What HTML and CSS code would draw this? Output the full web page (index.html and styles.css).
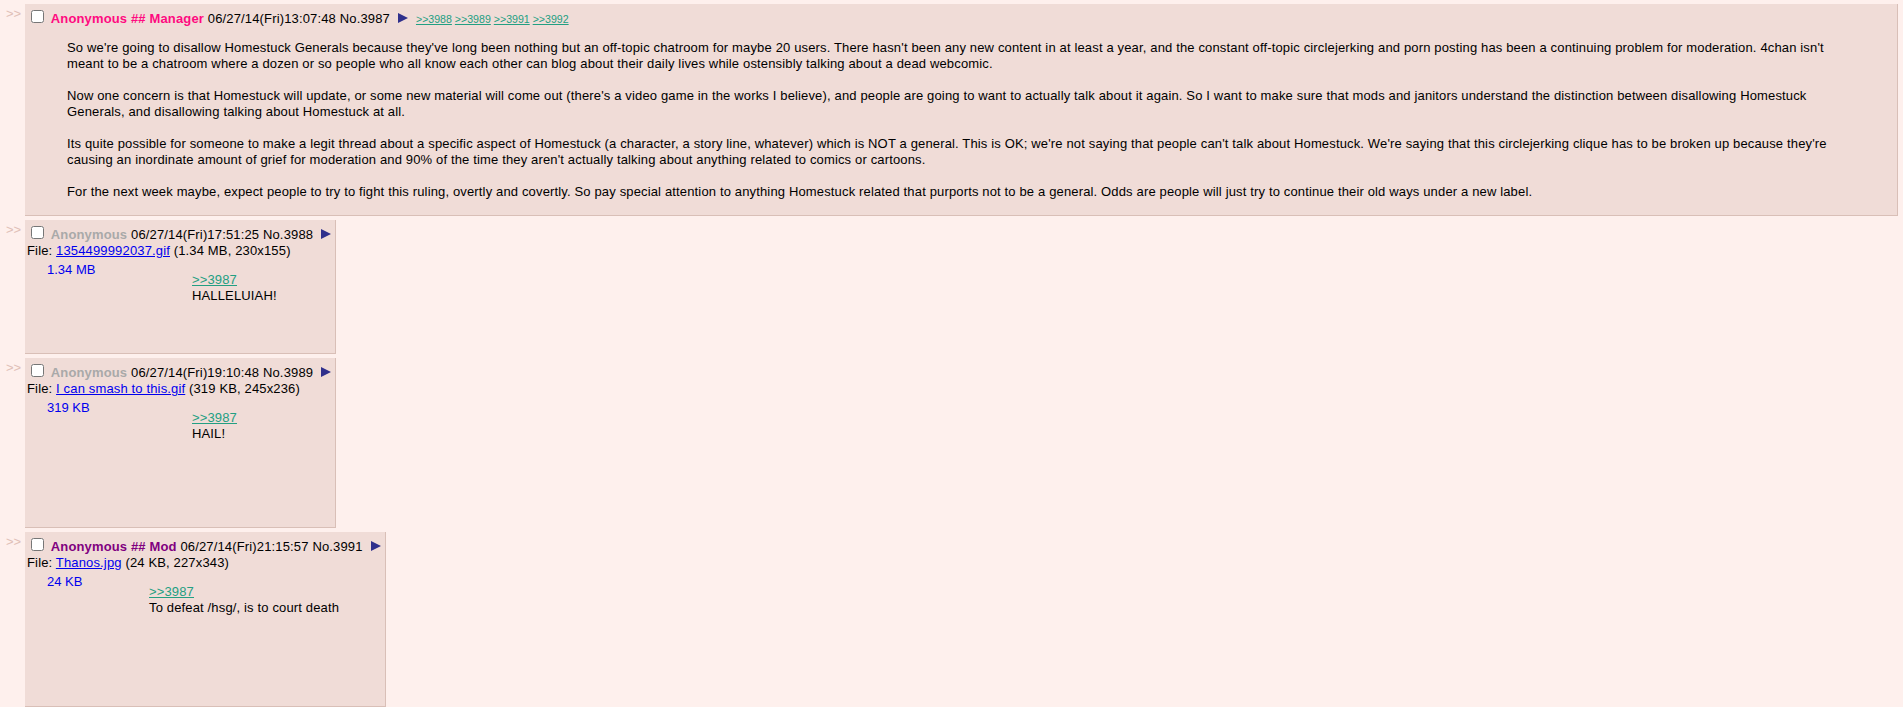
FILE: index.html
```html
<!DOCTYPE html>
<html lang="en">
<head>
  <meta charset="UTF-8">
  <meta name="viewport" content="width=device-width, initial-scale=1.0">
  <title>/co/ - Thread No.3987</title>
  <link rel="stylesheet" href="styles.css">
</head>
<body>

  <div class="thread">

    <!-- Opening post -->
    <div class="post-container">
      <div class="side-arrows">&gt;&gt;</div>
      <div class="post">
        <div class="post-info">
          <input type="checkbox">
          <span class="name manager">Anonymous ## Manager</span>
          <span class="date">06/27/14(Fri)13:07:48</span>
          <span class="post-num">No.3987</span><a class="menu-btn"></a><span class="backlinks"><a href="#p3988">&gt;&gt;3988</a> <a href="#p3989">&gt;&gt;3989</a> <a href="#p3991">&gt;&gt;3991</a> <a href="#p3992">&gt;&gt;3992</a></span>
        </div>
        <blockquote class="message">
          So we're going to disallow Homestuck Generals because they've long been nothing but an off-topic chatroom for maybe 20 users. There hasn't been any new content in at least a year, and the constant off-topic circlejerking and porn posting has been a continuing problem for moderation. 4chan isn't meant to be a chatroom where a dozen or so people who all know each other can blog about their daily lives while ostensibly talking about a dead webcomic.<br><br>
          Now one concern is that Homestuck will update, or some new material will come out (there's a video game in the works I believe), and people are going to want to actually talk about it again. So I want to make sure that mods and janitors understand the distinction between disallowing Homestuck Generals, and disallowing talking about Homestuck at all.<br><br>
          Its quite possible for someone to make a legit thread about a specific aspect of Homestuck (a character, a story line, whatever) which is NOT a general. This is OK; we're not saying that people can't talk about Homestuck. We're saying that this circlejerking clique has to be broken up because they're causing an inordinate amount of grief for moderation and 90% of the time they aren't actually talking about anything related to comics or cartoons.<br><br>
          For the next week maybe, expect people to try to fight this ruling, overtly and covertly. So pay special attention to anything Homestuck related that purports not to be a general. Odds are people will just try to continue their old ways under a new label.
        </blockquote>
      </div>
    </div>

    <!-- Replies -->
    <div class="post-container" id="p3988">
      <div class="side-arrows">&gt;&gt;</div>
      <div class="post">
        <div class="post-info">
          <input type="checkbox">
          <span class="name">Anonymous</span>
          <span class="date">06/27/14(Fri)17:51:25</span>
          <span class="post-num">No.3988</span><a class="menu-btn"></a>
        </div>
        <div class="file">
          <div class="file-text">File: <a href="#">1354499992037.gif</a> (1.34 MB, 230x155)</div>
          <a class="file-thumb thumb-wide" href="#">1.34 MB</a>
        </div>
        <blockquote class="message">
          <a class="quotelink" href="#">&gt;&gt;3987</a><br>
          HALLELUIAH!
        </blockquote>
      </div>
    </div>

    <div class="post-container" id="p3989">
      <div class="side-arrows">&gt;&gt;</div>
      <div class="post">
        <div class="post-info">
          <input type="checkbox">
          <span class="name">Anonymous</span>
          <span class="date">06/27/14(Fri)19:10:48</span>
          <span class="post-num">No.3989</span><a class="menu-btn"></a>
        </div>
        <div class="file">
          <div class="file-text">File: <a href="#">I can smash to this.gif</a> (319 KB, 245x236)</div>
          <a class="file-thumb thumb-square" href="#">319 KB</a>
        </div>
        <blockquote class="message">
          <a class="quotelink" href="#">&gt;&gt;3987</a><br>
          HAIL!
        </blockquote>
      </div>
    </div>

    <div class="post-container" id="p3991">
      <div class="side-arrows">&gt;&gt;</div>
      <div class="post">
        <div class="post-info">
          <input type="checkbox">
          <span class="name mod">Anonymous ## Mod</span>
          <span class="date">06/27/14(Fri)21:15:57</span>
          <span class="post-num">No.3991</span><a class="menu-btn"></a>
        </div>
        <div class="file">
          <div class="file-text">File: <a href="#">Thanos.jpg</a> (24 KB, 227x343)</div>
          <a class="file-thumb thumb-tall" href="#">24 KB</a>
        </div>
        <blockquote class="message">
          <a class="quotelink" href="#">&gt;&gt;3987</a><br>
          To defeat /hsg/, is to court death
        </blockquote>
      </div>
    </div>

  </div>

</body>
</html>
```

FILE: styles.css
```css
* { box-sizing: border-box; }
body { margin: 0; padding: 0 5px; background: #fef0ed; color: #000; font-family: "Liberation Sans", Arial, sans-serif; font-size: 13px; line-height: 16px; }

.side-arrows { float: left; width: 18px; margin-right: 2px; padding: 2px 0 0 1px; color: #e0bfb7; }

/* Post box */
.post {
  display: table;
  background: #f0dcd7;
  border: 1px solid #d9bfb7;
  border-top: none;
  border-left: none;
  padding: 2px;
  margin: 4px 0;
}

.post-info { padding-top: 1px; }
.post-info, .file-text { letter-spacing: 0.15px; }
.post-info input { margin: 3px 3px 3px 4px; vertical-align: baseline; }
.name { color: #a9a9a9; font-weight: bold; }
.name.manager { color: #ff0a80; }
.name.mod { color: #800080; }

/* Post menu arrow */
.menu-btn {
  display: inline-block;
  margin: 0 2px 0 8px;
  border-left: 10px solid #30308c;
  border-top: 5px solid transparent;
  border-bottom: 5px solid transparent;
}

.backlinks { margin-left: 6px; font-size: 10.6px; letter-spacing: 0; }
.backlinks a, .quotelink { color: #239f82; text-decoration: underline; }

/* Attached file */
.file-text a { color: #0000ee; }
.file-thumb { float: left; margin: 3px 20px 5px; color: #0000ee; text-decoration: none; }
.thumb-wide { width: 125px; height: 84px; }
.thumb-square { width: 125px; height: 120px; }
.thumb-tall { width: 82px; height: 125px; }

.message { margin: 13px 40px; letter-spacing: 0.15px; }
```
